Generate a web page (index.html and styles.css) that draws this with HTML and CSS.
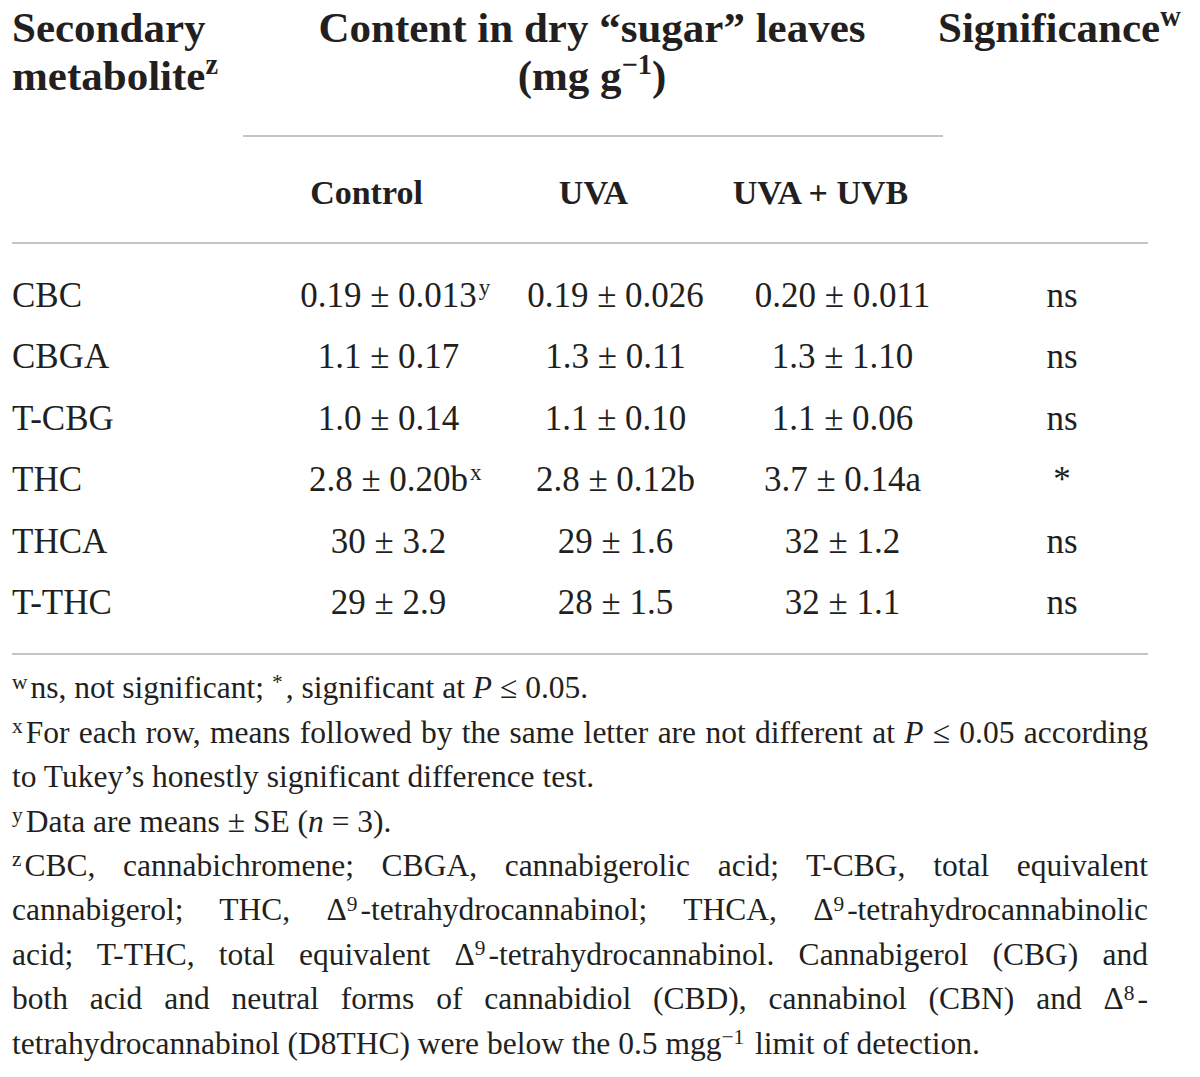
FILE: index.html
```html
<!DOCTYPE html>
<html lang="en">
<head>
<meta charset="utf-8">
<title>Secondary metabolites table</title>
<link rel="stylesheet" href="styles.css">
</head>
<body>
<div class="page">
  <div class="grid">
    <div class="h-meta">Secondary<br>metabolite<sup class="sup">z</sup></div>
    <div class="h-content">
      <div class="h-content-text">Content in dry “sugar” leaves<br>(mg g<sup class="sup">−1</sup>)</div>
      <div class="rule-partial"></div>
    </div>
    <div class="h-sig"><span class="sig-text">Significance<sup class="sup">w</sup></span></div>

    <div class="sub sub-empty"></div>
    <div class="sub">Control</div>
    <div class="sub">UVA</div>
    <div class="sub">UVA + UVB</div>
    <div class="sub sub-empty"></div>

    <div class="rule-full"></div>

    <div class="cell name first">CBC</div>
    <div class="cell num first">0.19 ± 0.013<span class="hang"><sup class="dsup">y</sup></span></div>
    <div class="cell num first">0.19 ± 0.026</div>
    <div class="cell num first">0.20 ± 0.011</div>
    <div class="cell sig first">ns</div>

    <div class="cell name">CBGA</div>
    <div class="cell num">1.1 ± 0.17</div>
    <div class="cell num">1.3 ± 0.11</div>
    <div class="cell num">1.3 ± 1.10</div>
    <div class="cell sig">ns</div>

    <div class="cell name">T-CBG</div>
    <div class="cell num">1.0 ± 0.14</div>
    <div class="cell num">1.1 ± 0.10</div>
    <div class="cell num">1.1 ± 0.06</div>
    <div class="cell sig">ns</div>

    <div class="cell name">THC</div>
    <div class="cell num">2.8 ± 0.20b<span class="hang"><sup class="dsup">x</sup></span></div>
    <div class="cell num">2.8 ± 0.12b</div>
    <div class="cell num">3.7 ± 0.14a</div>
    <div class="cell sig">*</div>

    <div class="cell name">THCA</div>
    <div class="cell num">30 ± 3.2</div>
    <div class="cell num">29 ± 1.6</div>
    <div class="cell num">32 ± 1.2</div>
    <div class="cell sig">ns</div>

    <div class="cell name last">T-THC</div>
    <div class="cell num last">29 ± 2.9</div>
    <div class="cell num last">28 ± 1.5</div>
    <div class="cell num last">32 ± 1.1</div>
    <div class="cell sig last">ns</div>

    <div class="rule-full"></div>
  </div>

  <div class="notes">
    <div class="line"><sup class="fsup">w</sup>ns, not significant; <sup class="fsup">*</sup>, significant at <i>P</i> ≤ 0.05.</div>
    <div class="line jl"><sup class="fsup">x</sup>For each row, means followed by the same letter are not different at <i>P</i> ≤ 0.05 according</div>
    <div class="line">to Tukey’s honestly significant difference test.</div>
    <div class="line"><sup class="fsup">y</sup>Data are means ± SE (<i>n</i> = 3).</div>
    <div class="line jl"><sup class="fsup">z</sup>CBC, cannabichromene; CBGA, cannabigerolic acid; T-CBG, total equivalent</div>
    <div class="line jl">cannabigerol; THC, Δ<sup class="fsup">9</sup>-tetrahydrocannabinol; THCA, Δ<sup class="fsup">9</sup>-tetrahydrocannabinolic</div>
    <div class="line jl">acid; T-THC, total equivalent Δ<sup class="fsup">9</sup>-tetrahydrocannabinol. Cannabigerol (CBG) and</div>
    <div class="line jl">both acid and neutral forms of cannabidiol (CBD), cannabinol (CBN) and Δ<sup class="fsup">8</sup>-</div>
    <div class="line">tetrahydrocannabinol (D8THC) were below the 0.5 mgg<sup class="fsup">−1</sup> limit of detection.</div>
  </div>
</div>
</body>
</html>
```

FILE: styles.css
```css
html, body {
  margin: 0;
  padding: 0;
  background: #ffffff;
}

body {
  font-family: "Liberation Serif", "Times New Roman", serif;
  color: #231f20;
}

.page {
  width: 1136px;
  margin-left: 12px;
}

.grid {
  display: grid;
  grid-template-columns: 263px 227px 227px 227px 192px;
}

.sup {
  font-size: 0.66em;
  vertical-align: 0.55em;
  line-height: 0;
}

.h-meta,
.h-content,
.h-sig {
  font-weight: bold;
  font-size: 43px;
  line-height: 48px;
  padding-top: 4px;
}

.h-meta {
  grid-column: 1;
}

.h-content {
  grid-column: 2 / 5;
}

.h-content-text {
  text-align: center;
  padding-right: 47px;
}

.rule-partial {
  height: 2px;
  background: #c4c4c4;
  margin: 35px 13px 0 -32px;
}

.h-sig {
  grid-column: 5;
  white-space: nowrap;
}

.sig-text {
  display: inline-block;
  margin-left: -18px;
}

.sub {
  font-weight: bold;
  font-size: 34px;
  line-height: 40px;
  text-align: center;
  padding: 36px 44px 29px 0;
}

.rule-full {
  grid-column: 1 / -1;
  height: 2px;
  background: #c4c4c4;
}

.cell {
  font-size: 35px;
  line-height: 61.4px;
  white-space: nowrap;
}

.cell.first {
  padding-top: 21px;
}

.cell.last {
  padding-bottom: 20px;
}

.name {
  text-align: left;
}

.num {
  text-align: center;
}

.sig {
  text-align: center;
  padding-left: 20px;
}

.hang {
  display: inline-block;
  width: 0;
  overflow: visible;
}

.dsup {
  font-size: 0.66em;
  vertical-align: 0.5em;
  line-height: 0;
  margin-left: 2px;
}

.notes {
  padding-top: 11px;
  font-size: 31.5px;
  line-height: 44.4px;
}

.line {
  white-space: nowrap;
}

.jl {
  text-align: justify;
  text-align-last: justify;
}

.fsup {
  font-size: 0.68em;
  vertical-align: 0.45em;
  line-height: 0;
  margin-right: 3px;
}
```
